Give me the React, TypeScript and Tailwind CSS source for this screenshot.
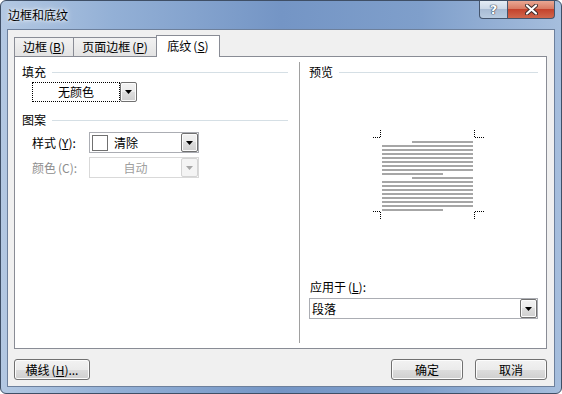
import React from 'react';

// mnemonic "(X)" with the letter underlined, as in the Win7 dialog
function Mn({ k }: { k: string }) {
  return (
    <span className="ml-[2px]">
      (<span className="underline underline-offset-[1px]">{k}</span>)
    </span>
  );
}

function Arrow({ disabled }: { disabled?: boolean }) {
  return (
    <svg width="7" height="4" viewBox="0 0 7 4">
      <polygon points="0,0 7,0 3.5,4" fill={disabled ? '#a6a6a6' : '#000'} />
    </svg>
  );
}

function DropButton({ disabled }: { disabled?: boolean }) {
  return (
    <div
      className={`w-[17px] h-full flex items-center justify-center border rounded-[2px] ${
        disabled
          ? 'border-[#d4d4d4] bg-[#f4f4f4]'
          : 'border-[#707070] bg-[linear-gradient(#f2f2f2_0%,#ebebeb_50%,#dddddd_50%,#cfcfcf_100%)] shadow-[inset_0_0_0_1px_#fbfbfb]'
      }`}
    >
      <Arrow disabled={disabled} />
    </div>
  );
}

function GroupHeader({ label }: { label: string }) {
  return (
    <div className="h-[14px] flex items-center gap-[6px]">
      <span>{label}</span>
      <div className="flex-1 h-px bg-[#d5dfe5]" />
    </div>
  );
}

function Button({ children, w }: { children: React.ReactNode; w: string }) {
  return (
    <button
      type="button"
      className={`${w} h-[21px] rounded-[3px] border border-[#707070] bg-[linear-gradient(#f2f2f2_0%,#ebebeb_50%,#dddddd_50%,#cfcfcf_100%)] shadow-[inset_0_0_0_1px_#fcfcfc] flex items-center justify-center text-black`}
    >
      {children}
    </button>
  );
}

const TABS = [
  { label: '边框', key: 'B', w: 'w-[60px]' },
  { label: '页面边框', key: 'P', w: 'w-[84px]' },
];

// little print-preview page: grey text lines with dotted crop marks
function Preview() {
  const lines: { x1: number; x2: number; y: number }[] = [];
  for (let p = 0; p < 2; p++) {
    for (let i = 0; i < 9; i++) {
      const y = 141 + (p * 9 + i) * 4 - 128;
      if (i === 0) lines.push({ x1: 414 - 372, x2: 475 - 372, y });
      else if (i === 8) lines.push({ x1: 384 - 372, x2: 445 - 372, y });
      else lines.push({ x1: 384 - 372, x2: 475 - 372, y });
    }
  }
  const dot = { stroke: '#000', strokeWidth: 1, strokeDasharray: '1 1', shapeRendering: 'crispEdges' as const };
  return (
    <svg width="116" height="94" viewBox="0 0 116 94" className="block">
      {lines.map((l, i) => (
        <rect key={i} x={l.x1} y={l.y} width={l.x2 - l.x1} height={2} fill="#a6a6a6" />
      ))}
      {/* top-left */}
      <line x1={3} y1={9.5} x2={11} y2={9.5} {...dot} />
      <line x1={10.5} y1={2} x2={10.5} y2={10} {...dot} />
      {/* top-right */}
      <line x1={104.5} y1={2} x2={104.5} y2={10} {...dot} />
      <line x1={105} y1={9.5} x2={114} y2={9.5} {...dot} />
      {/* bottom-left */}
      <line x1={3} y1={83.5} x2={11} y2={83.5} {...dot} />
      <line x1={10.5} y1={84} x2={10.5} y2={92} {...dot} />
      {/* bottom-right */}
      <line x1={104.5} y1={84} x2={104.5} y2={92} {...dot} />
      <line x1={105} y1={83.5} x2={114} y2={83.5} {...dot} />
    </svg>
  );
}

export default function App() {
  return (
    <div className="w-[562px] h-[394px] flex flex-col rounded-[6px] border border-[#3f4f66] bg-[linear-gradient(90deg,#b3c8e2_0%,#93b0d6_20%,#7495c5_50%,#7f9fcb_75%,#a6bedd_100%)] text-[12px] leading-[14px] text-black font-['Noto_Sans_CJK_SC',sans-serif]">
      {/* title bar */}
      <div className="h-[28px] flex items-start">
        <div className="pl-[7px] pt-[7px] [text-shadow:0_0_6px_#ffffff,0_0_3px_#ffffff]">边框和底纹</div>
        <div className="ml-auto mr-[6px] flex h-[18px]">
          <div className="w-[29px] h-full rounded-bl-[4px] border border-t-0 border-[#45556d] bg-[linear-gradient(#e4ecf5_0%,#c9d6e6_50%,#a9bcd4_50%,#b9cbe0_100%)] flex items-center justify-center">
            <span className="text-white font-bold text-[13px] leading-none font-['DejaVu_Sans',sans-serif] [text-shadow:0_0_1px_#2b3a52,0_0_1px_#2b3a52,0_0_1px_#2b3a52]">?</span>
          </div>
          <div className="w-[47px] h-full rounded-br-[4px] border border-l-0 border-t-0 border-[#45556d] bg-[linear-gradient(#e9a793_0%,#d7775f_50%,#c4432d_50%,#d0674d_100%)] flex items-center justify-center">
            <svg width="13" height="11" viewBox="0 0 13 11">
              <path d="M2 1.5 L11 9.5 M11 1.5 L2 9.5" stroke="#3b2a2a" strokeWidth="4" strokeLinecap="round" />
              <path d="M2 1.5 L11 9.5 M11 1.5 L2 9.5" stroke="#ffffff" strokeWidth="2.2" strokeLinecap="round" />
            </svg>
          </div>
        </div>
      </div>

      {/* client area */}
      <div className="mx-[6px] h-[358px] border border-[#6d809c] bg-[#f0f0f0] pt-[5px] pl-[6px] pr-[7px] flex flex-col">
        {/* tabs */}
        <div className="h-[21px] flex items-end">
          {TABS.map((t, i) => (
            <div
              key={t.key}
              className={`${t.w} ${i > 0 ? '-ml-px' : ''} h-[19px] border border-b-0 border-[#898c95] bg-[linear-gradient(#f2f2f2,#e3e3e3)] flex items-center justify-center`}
            >
              {t.label}
              <Mn k={t.key} />
            </div>
          ))}
          <div className="-ml-px w-[64px] h-[22px] -mb-px relative z-10 border border-b-0 border-[#898c95] bg-white flex items-center justify-center pb-[1px]">
            底纹
            <Mn k="S" />
          </div>
        </div>

        {/* panel */}
        <div className="h-[293px] border border-[#898c95] bg-white flex">
          {/* left column */}
          <div className="w-[286px] pl-[7px] pt-[8px] pr-[11px]">
            <GroupHeader label="填充" />
            <div className="mt-[3px] ml-[10px] flex h-[20px]">
              <div className="w-[88px] h-full border border-dotted border-black flex items-center justify-center">
                无颜色
              </div>
              <DropButton />
            </div>

            <div className="mt-[11px]">
              <GroupHeader label="图案" />
            </div>
            <div className="mt-[5px] ml-[10px] flex items-center">
              <div className="w-[57px]">
                样式<Mn k="Y" />:
              </div>
              <div className="w-[110px] h-[21px] border border-[#abadb3] bg-white flex items-center">
                <div className="ml-[2px] w-[16px] h-[16px] border border-[#707070] bg-white" />
                <span className="ml-[6px] flex-1">清除</span>
                <div className="h-full">
                  <DropButton />
                </div>
              </div>
            </div>
            <div className="mt-[4px] ml-[10px] flex items-center text-[#8d8d8d]">
              <div className="w-[57px]">
                颜色<span className="ml-[2px]">(C)</span>:
              </div>
              <div className="w-[110px] h-[21px] border border-[#d9d9d9] bg-white flex items-center">
                <span className="flex-1 text-center text-[#a0a0a0]">自动</span>
                <div className="h-full">
                  <DropButton disabled />
                </div>
              </div>
            </div>
          </div>

          {/* separator */}
          <div className="w-px my-[5px] bg-[#a0a0a0]" />

          {/* right column */}
          <div className="flex-1 pl-[9px] pt-[8px] pr-[8px]">
            <GroupHeader label="预览" />
            <div className="mt-[49px] ml-[61px]">
              <Preview />
            </div>
            <div className="mt-[58px] ml-px">
              应用于<Mn k="L" />:
            </div>
            <div className="mt-[4px] w-[229px] h-[21px] border border-[#abadb3] bg-white flex items-center">
              <span className="ml-[2px] flex-1">段落</span>
              <div className="h-full">
                <DropButton />
              </div>
            </div>
          </div>
        </div>

        {/* bottom buttons */}
        <div className="mt-[10px] flex gap-[12px]">
          <Button w="w-[76px]">
            横线<Mn k="H" />...
          </Button>
          <div className="ml-auto" />
          <Button w="w-[72px]">确定</Button>
          <Button w="w-[72px]">取消</Button>
        </div>
      </div>
    </div>
  );
}
